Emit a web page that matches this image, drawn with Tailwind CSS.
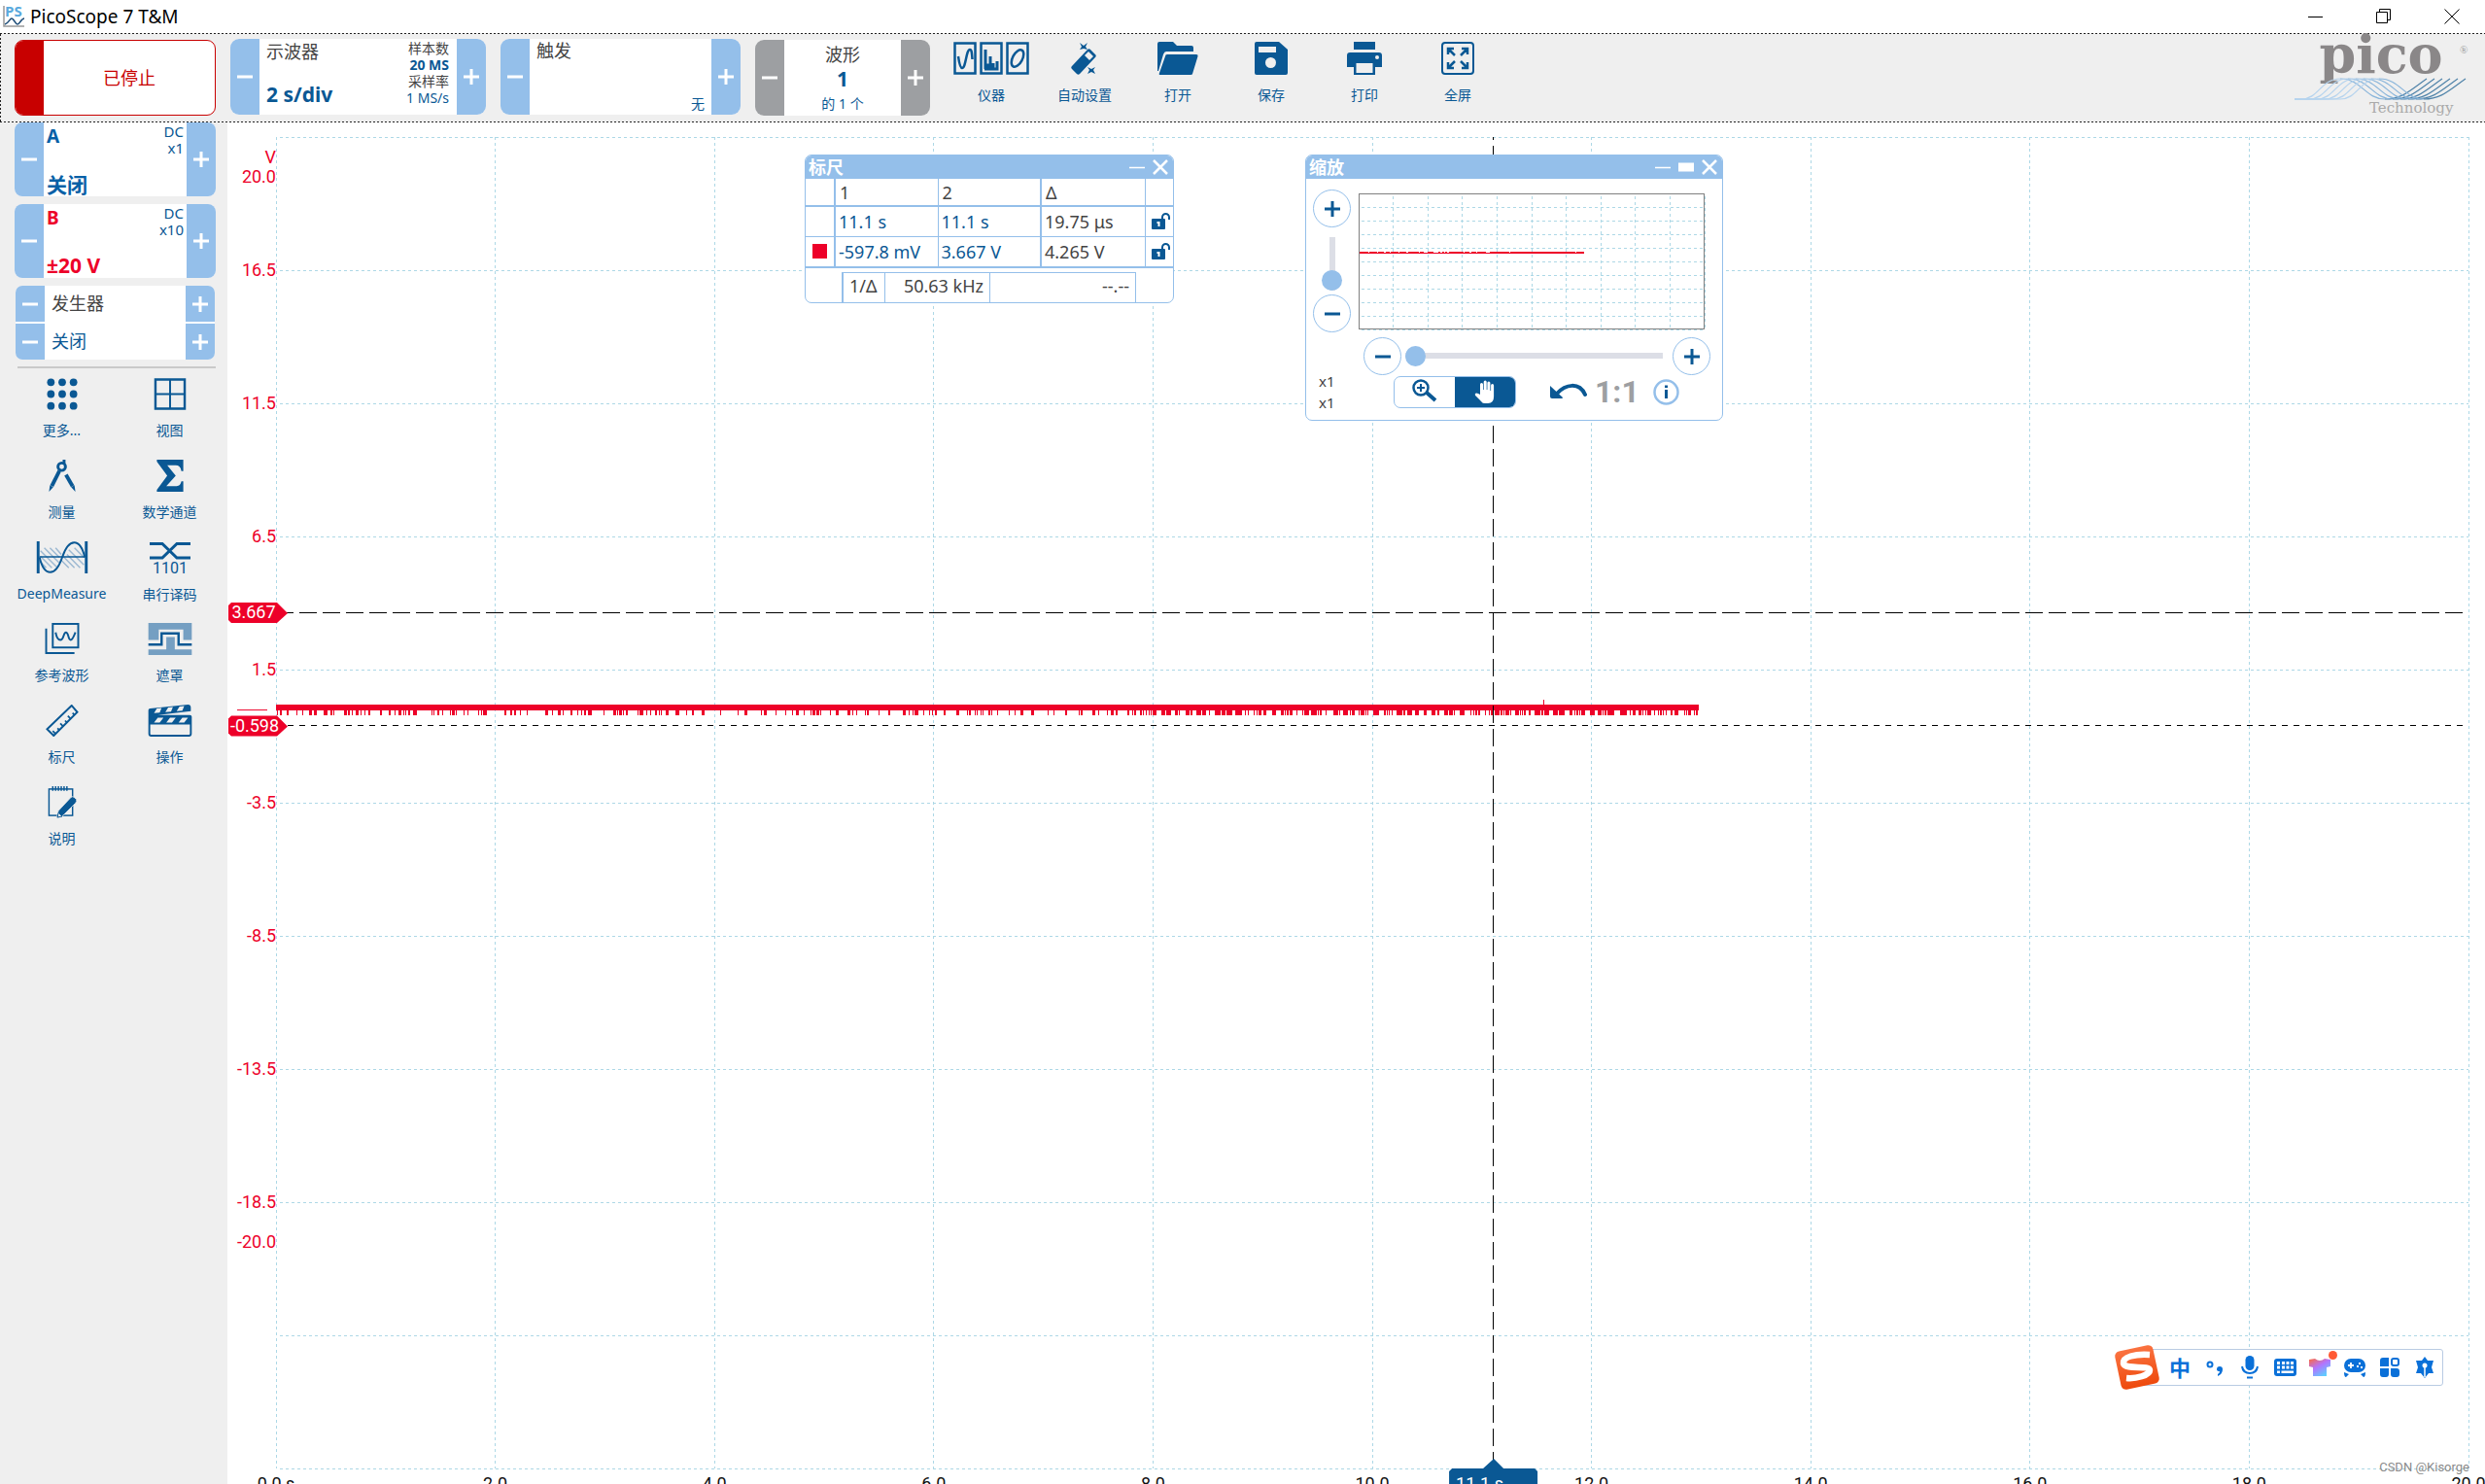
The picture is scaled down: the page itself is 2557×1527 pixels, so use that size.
<!DOCTYPE html>
<html lang="zh-CN">
<head>
<meta charset="utf-8">
<title>PicoScope 7 T&amp;M</title>
<script src="https://cdn.jsdelivr.net/npm/@tailwindcss/browser@4"></script>
</head>
<body class="flex h-screen flex-col overflow-hidden bg-white font-['Noto_Sans','Noto_Sans_CJK_SC',sans-serif] text-[#444]">

<!-- shared symbols -->
<svg class="hidden">
  <symbol id="minus" viewBox="0 0 16 16"><path d="M0 8h16" stroke="currentColor" stroke-width="3"/></symbol>
  <symbol id="plus" viewBox="0 0 16 16"><path d="M0 8h16M8 0v16" stroke="currentColor" stroke-width="3"/></symbol>
  <symbol id="lock" viewBox="0 0 20 18"><rect x="0" y="6" width="14" height="11" rx="1" fill="#0a5894"/><path d="M11 7V4.500a3.500 3.500 0 0 1 7 0V7" fill="none" stroke="#0a5894" stroke-width="2"/><path d="M5.500 9h3v5h-2v-3h-1z" fill="#fff"/></symbol>
</svg>

<header class="flex h-[34px] shrink-0 items-center justify-between pr-[26px] pl-[3px]">
  <div class="flex items-center gap-[6px]">
    <svg class="h-6 w-[22px] overflow-visible" viewBox="0 0 22 24"><path d="M1 1v21h21" fill="none" stroke="#999" stroke-width="1.500"/><path d="M2 20c4-1 5-6 7-6s4 6 6 6 4-6 7-6" fill="none" stroke="#1f4e79" stroke-width="1.500"/><text x="2" y="12" font-family="Open Sans" font-weight="700" font-size="15" fill="#5aa9dd">PS</text></svg>
    <h1 class="text-[19px] leading-6 text-black">PicoScope 7 T&amp;M</h1>
  </div>
  <div class="flex items-center gap-[54px] text-black">
    <button aria-label="最小化"><svg class="size-4" viewBox="0 0 16 16"><path d="M0 8.500h15" stroke="currentColor"/></svg></button>
    <button aria-label="还原"><svg class="size-4" viewBox="0 0 16 16"><path d="M.5 3.500h11v11H.5zM3.500 3.500v-3h11v11h-3" fill="none" stroke="currentColor"/></svg></button>
    <button aria-label="关闭"><svg class="size-4" viewBox="0 0 16 16"><path d="M.5.5l15 15M15.500.5l-15 15" stroke="currentColor"/></svg></button>
  </div>
</header>

<!-- toolbar -->
<div class="h-px shrink-0 bg-[repeating-linear-gradient(90deg,#222_0_2px,#efefef_2px_4px)]"></div>
<div class="flex h-[90px] shrink-0 items-start bg-[#efefef] pr-[17px]">
  <div class="h-full w-px bg-[repeating-linear-gradient(180deg,#222_0_2px,#efefef_2px_4px)]"></div>
  <button class="mt-[6px] ml-[14px] flex h-[78px] w-[207px] overflow-hidden rounded-[9px] border border-[#c80000] bg-white text-lg text-[#c80000]">
    <span class="h-full w-[29px] bg-[#c80000]"></span><span class="flex flex-1 items-center justify-center self-center">已停止</span>
  </button>

  <section class="mt-[5px] ml-[15px] flex h-[78px] w-[263px] overflow-hidden rounded-[9px] bg-white">
    <button aria-label="减小时基" class="flex w-[30px] items-center justify-center bg-[#94bfea] text-white"><svg class="size-4"><use href="#minus"/></svg></button>
    <div class="flex flex-1 justify-between pr-2 pl-[7px]">
      <div class="flex flex-col justify-between pb-[7px]"><span class="text-lg leading-[27px]">示波器</span><span class="text-[21px] leading-7 font-bold text-[#0a5894]">2 s/div</span></div>
      <div class="flex flex-col pt-px text-right text-[14px] leading-[17px]"><span>样本数</span><b class="text-[#0a5894]">20 MS</b><span>采样率</span><span class="text-[#0a5894]">1 MS/s</span></div>
    </div>
    <button aria-label="增大时基" class="flex w-[30px] items-center justify-center bg-[#94bfea] text-white"><svg class="size-4"><use href="#plus"/></svg></button>
  </section>

  <section class="mt-[5px] ml-[15px] flex h-[78px] w-[247px] overflow-hidden rounded-[9px] bg-white">
    <button aria-label="上一触发" class="flex w-[30px] items-center justify-center bg-[#94bfea] text-white"><svg class="size-4"><use href="#minus"/></svg></button>
    <div class="flex flex-1 flex-col justify-between px-[7px]"><span class="text-lg leading-6">触发</span><span class="self-end text-[14px] leading-[22px] text-[#0a5894]">无</span></div>
    <button aria-label="下一触发" class="flex w-[30px] items-center justify-center bg-[#94bfea] text-white"><svg class="size-4"><use href="#plus"/></svg></button>
  </section>

  <section class="mt-[6px] ml-[15px] flex h-[78px] w-[180px] overflow-hidden rounded-[9px] bg-white">
    <button aria-label="上一波形" class="flex w-[30px] items-center justify-center bg-[#9d9fa2] text-white"><svg class="size-4"><use href="#minus"/></svg></button>
    <div class="flex flex-1 flex-col items-center pt-[3px]"><span class="text-lg leading-6">波形</span><b class="text-[21px] leading-[26px] text-[#0a5894]">1</b><span class="text-[14px] leading-[25px] text-[#0a5894]">的 1 个</span></div>
    <button aria-label="下一波形" class="flex w-[30px] items-center justify-center bg-[#9d9fa2] text-white"><svg class="size-4"><use href="#plus"/></svg></button>
  </section>

  <nav class="ml-[15px] flex pt-2 text-[14px] leading-5 text-[#0a5894]">
    <button class="flex w-24 flex-col items-center gap-[11px]">
      <svg class="h-[34px] w-[78px]" viewBox="0 0 78 34" fill="none" stroke="currentColor" stroke-width="2.500"><path d="M1.500 1.500h21v31h-21zM28.500 1.500h21v31h-21zM55.500 1.500h21v31h-21z"/><path d="M5 15c1 7 2 12 4 12 4 0 4-19 8-19 2 0 2 4 2.500 10"/><path d="M33 28V8v16h2v3h3V15v12h3v-5 6h4v-8 8H32" stroke-width="3"/><ellipse cx="66" cy="17" rx="5" ry="9.500" transform="rotate(28 66 17)"/></svg>仪器</button>
    <button class="flex w-24 flex-col items-center gap-[11px]">
      <svg class="size-[34px]" viewBox="0 0 34 34"><path d="M20 8c1-1 2-1 3 0l5 5c1 1 1 2 0 3L12 33c-1 1-2 1-3 0l-5-5c-1-1-1-2 0-3z" fill="currentColor"/><path d="M21 10l5 5-4 4-5-5z" fill="#efefef"/><path d="M12 1l4 3 4-3-2 4 2 3-4-1-4 1 2-3zM20 26l4 2 4-2-2 3 2 4-4-2-4 2 2-4z" fill="currentColor"/></svg>自动设置</button>
    <button class="flex w-24 flex-col items-center gap-[11px]">
      <svg class="h-[34px] w-[42px]" viewBox="0 0 42 34" fill="currentColor"><path d="M0 2q0-2 2-2h14l4 4h15q2 0 2 2v4H9q-2 0-3 3L1 30H0zM10 13h30q2 0 1.500 2L36 33q0 1-2 1H3q-2 0-1-2L8 15q0-2 2-2z"/></svg>打开</button>
    <button class="flex w-24 flex-col items-center gap-[11px]">
      <svg class="size-[34px]" viewBox="0 0 34 34"><path d="M2 0h23l9 8v24q0 2-2 2H2q-2 0-2-2V2q0-2 2-2z" fill="currentColor"/><path d="M4 5h18v6H4z" fill="#efefef"/><circle cx="16.500" cy="21.500" r="5.500" fill="#efefef"/></svg>保存</button>
    <button class="flex w-24 flex-col items-center gap-[11px]">
      <svg class="h-[34px] w-9" viewBox="0 0 36 34"><path d="M7 0h22v8H7zM3 11h30q3 0 3 3v12h-7v8H7v-8H0V14q0-3 3-3z" fill="currentColor"/><path d="M9.500 22h17v10h-17z" fill="#efefef"/><circle cx="31" cy="16" r="2" fill="#efefef"/></svg>打印</button>
    <button class="flex w-24 flex-col items-center gap-[11px]">
      <svg class="size-[34px]" viewBox="0 0 34 34" fill="none" stroke="currentColor" stroke-width="2"><rect x="1" y="1" width="32" height="32" rx="3"/><path stroke-width="2.500" d="M14 14L8 8M7 13V7h6M20 14l6-6M27 13V7h-6M14 20l-6 6M7 21v6h6M20 20l6 6M27 21v6h-6"/></svg>全屏</button>
  </nav>

  <svg class="ml-auto h-[86px] w-[182px] overflow-visible" viewBox="0 0 182 86" role="img" aria-label="pico Technology">
    <text x="92" y="40" text-anchor="middle" font-family="DejaVu Serif" font-weight="700" font-size="54" fill="#8a8788">pico</text>
    <text x="173" y="20" font-family="Liberation Serif" font-size="11" fill="#999">®</text>
    <g fill="none" stroke-width="1.200" id="waves"></g>
    <text x="80" y="81" font-family="DejaVu Serif" font-size="15" fill="#aaa">Technology</text>
  </svg>
</div>
<div class="h-px shrink-0 bg-[repeating-linear-gradient(90deg,#222_0_2px,#efefef_2px_4px)]"></div>

<div class="flex min-h-0 flex-1">
  <aside class="flex w-[234px] shrink-0 flex-col bg-[#efefef]">
    <div class="flex flex-col gap-2 pr-3 pl-[15px]">
      <section class="flex h-[76px] overflow-hidden rounded-[8px] bg-white">
        <button aria-label="A 减小量程" class="flex w-[30px] items-center justify-center bg-[#94bfea] text-white"><svg class="size-4"><use href="#minus"/></svg></button>
        <div class="flex flex-1 justify-between px-[3px] text-[#0560a6]">
          <div class="flex flex-col justify-between font-bold"><span class="text-[19px] leading-7">A</span><span class="text-[21px] leading-6">关闭</span></div>
          <div class="flex flex-col pt-px text-right text-[15px] leading-[17px] text-[#0a5894]"><span>DC</span><span>x1</span></div>
        </div>
        <button aria-label="A 增大量程" class="flex w-[30px] items-center justify-center bg-[#94bfea] text-white"><svg class="size-4"><use href="#plus"/></svg></button>
      </section>
      <section class="flex h-[76px] overflow-hidden rounded-[8px] bg-white">
        <button aria-label="B 减小量程" class="flex w-[30px] items-center justify-center bg-[#94bfea] text-white"><svg class="size-4"><use href="#minus"/></svg></button>
        <div class="flex flex-1 justify-between px-[3px] text-[#ed0029]">
          <div class="flex flex-col justify-between pb-px font-bold"><span class="text-[19px] leading-7">B</span><span class="text-[21px] leading-6">±20 V</span></div>
          <div class="flex flex-col pt-px text-right text-[15px] leading-[17px] text-[#0a5894]"><span>DC</span><span>x10</span></div>
        </div>
        <button aria-label="B 增大量程" class="flex w-[30px] items-center justify-center bg-[#94bfea] text-white"><svg class="size-4"><use href="#plus"/></svg></button>
      </section>
      <section class="mx-px grid h-[76px] grid-cols-[30px_1fr_30px] grid-rows-2 gap-y-[2px] overflow-hidden rounded-[7px] bg-white text-lg leading-9">
        <button aria-label="上一发生器" class="flex items-center justify-center bg-[#94bfea] text-white"><svg class="size-4"><use href="#minus"/></svg></button><span class="pl-[7px]">发生器</span><button aria-label="下一发生器" class="flex items-center justify-center bg-[#94bfea] text-white"><svg class="size-4"><use href="#plus"/></svg></button>
        <button aria-label="上一状态" class="flex items-center justify-center bg-[#94bfea] text-white"><svg class="size-4"><use href="#minus"/></svg></button><span class="pl-[7px] text-[#0a5894]">关闭</span><button aria-label="下一状态" class="flex items-center justify-center bg-[#94bfea] text-white"><svg class="size-4"><use href="#plus"/></svg></button>
      </section>
    </div>
    <hr class="mt-[7px] mr-3 ml-[18px] border-t-2 border-[#c9c9c9]">
    <nav class="grid grid-cols-2 gap-y-5 pt-[10px] pr-1 pl-2 text-[14px] leading-5 text-[#0a5894]">
      <button class="flex h-16 flex-col items-center gap-[11px]"><svg class="size-[34px]" viewBox="0 0 34 34" fill="currentColor"><g id="dots"><circle cx="5" cy="4.500" r="4"/><circle cx="17" cy="4.500" r="4"/><circle cx="29" cy="4.500" r="4"/></g><use href="#dots" y="12.500"/><use href="#dots" y="25"/></svg>更多...</button>
      <button class="flex h-16 flex-col items-center gap-[11px]"><svg class="size-[34px]" viewBox="0 0 34 34" fill="none" stroke="currentColor"><path stroke-width="2.500" d="M1.500 1.500h31v31h-31z"/><path stroke-width="2" d="M17 1v32M1 17h32"/></svg>视图</button>
      <button class="flex h-16 flex-col items-center gap-[11px]"><svg class="size-[34px]" viewBox="0 0 34 34" fill="none" stroke="currentColor"><circle cx="16.500" cy="7.500" r="4" stroke-width="3"/><path d="M19 0v4" stroke-width="3"/><path d="M14 12L6 28" stroke-width="4"/><path d="M21 16l7 12" stroke-width="4"/><path d="M4 27l3.500 2L3 34zM26.500 29l3.500-2 1 7z" fill="currentColor" stroke="none"/></svg>测量</button>
      <button class="flex h-16 flex-col items-center gap-[11px]"><svg class="size-[34px]" viewBox="0 0 34 34" fill="currentColor"><path d="M3 0h28v12h-2q-1-6-6-6H14l9 11-10 11h11q4 0 5-5h2v11H3v-2l11-15L3 2z"/></svg>数学通道</button>
      <button class="flex h-16 flex-col items-center gap-[11px]"><svg class="h-[34px] w-[54px]" viewBox="0 0 54 34" fill="none" stroke="currentColor"><path stroke="#9db9d2" stroke-width="1.500" d="M4 10l18 18M4 16l12 12M8 7l16 16M14 7l10 10M20 7l6 7M4 22l6 6M28 16l12 12M32 14l14 14M34 9l16 16M40 7l10 10M26 20l8 8"/><path stroke-width="3" d="M1.500 0v34M52.500 0v34"/><path stroke-width="1.500" d="M3 16.500h48"/><path stroke-width="2" d="M3 17c5 21 17 21 24 0s19-21 24 0"/></svg>DeepMeasure</button>
      <button class="flex h-16 flex-col items-center gap-[11px]"><svg class="h-[34px] w-[42px] overflow-visible" viewBox="0 0 42 34"><path fill="none" stroke="currentColor" stroke-width="3" d="M0 2.500h13l15 14.500h14M0 17h13L28 2.500h14"/><text x="21" y="33" text-anchor="middle" font-family="Roboto" font-size="16" fill="currentColor">1101</text></svg>串行译码</button>
      <button class="flex h-16 flex-col items-center gap-[11px]"><svg class="h-[34px] w-9" viewBox="0 0 36 34" fill="none" stroke="currentColor"><rect x="8" y="1" width="27" height="25" stroke-width="2"/><path stroke-width="2" d="M1 6v26h30M11 10c1 5 3 8 5 8 4 0 3-8 6-8s2 8 5 8c2 0 3-3 5-8"/></svg>参考波形</button>
      <button class="flex h-16 flex-col items-center gap-[11px]"><svg class="h-[34px] w-[46px]" viewBox="0 0 46 34"><path fill="#759fc2" d="M0 0h46v18h-9V7H11v11H0zM19 15h9v13h18v6H0v-6h19z"/><path fill="none" stroke="currentColor" stroke-width="2.500" d="M0 23h14V11h18v12h14"/></svg>遮罩</button>
      <button class="flex h-16 flex-col items-center gap-[11px]"><svg class="size-[34px]" viewBox="0 0 34 34" fill="none" stroke="currentColor" stroke-width="2"><path d="M1 26L27 1l6 7L8 33z"/><path stroke-width="1.800" d="M10 31l-3-3M14 27l-2-2M18 23l-3-3M22 19l-2-2M26 15l-3-3M30 11l-2-2"/></svg>标尺</button>
      <button class="flex h-16 flex-col items-center gap-[11px]"><svg class="h-[34px] w-[46px]" viewBox="0 0 46 34"><path fill="currentColor" d="M0 6q0-2 2-2L42 0q3 0 3 3v4L10 11h34q2 0 2 2v18q0 3-3 3H3q-3 0-3-3z"/><path fill="#efefef" d="M2 21h42v10q0 1-1 1H3q-1 0-1-1zM9 4l5-.5-2 5-6 .5zM21 3l5-.5-2 5-6 .5zM33 2l5-.5-2 5-6 .5zM10 14h6l-4 5H6zM23 14h6l-4 5h-6zM36 14h6l-4 5h-6z"/></svg>操作</button>
      <button class="flex h-16 flex-col items-center gap-[11px]"><svg class="size-[34px]" viewBox="0 0 34 34" fill="none" stroke="currentColor"><rect x="3" y="3" width="25" height="28" stroke-width="1.500"/><path stroke-width="1.500" d="M7 0v5M10 0v5M13 0v5M16 0v5M19 0v5M22 0v5"/><path fill="currentColor" stroke="#efefef" stroke-width=".8" d="M26 12q2-2 4 0l2 2q1 2-1 4L18 31l-7 3 2-8z"/><path d="M12 33l1-5 4 4z" fill="#efefef" stroke-width="1"/></svg>说明</button>
    </nav>
  </aside>

  <main class="relative min-w-0 flex-1 overflow-hidden bg-white pt-[15px] pr-[17px] pb-4 pl-[50px]">
    <!-- scope view: 0..20 s across, 21.5 V at the top, 5 V per division -->
    <svg id="scope" class="block h-full w-full overflow-visible font-[Roboto,sans-serif] text-lg" role="img" aria-label="示波器视图">
      <g id="grid" stroke="#add8e6" stroke-dasharray="3 3" shape-rendering="crispEdges"></g>
      <g id="volts" fill="#ed0029" text-anchor="end"></g>
      <g id="times" fill="#111" text-anchor="middle"></g>
      <svg y="43%" width="1" height="1" overflow="visible"><path d="M-40 .5h31" stroke="#ed0029"/></svg>
      <svg y="43%" width="64.9%" height="12" viewBox="0 -6 1464 12" preserveAspectRatio="none" overflow="visible" shape-rendering="crispEdges"><g transform="translate(0 -6)"><path d="M0-5h1464v6H0zM1304-10h1v6h-1z" fill="#ed0029"/><path id="noise" fill="#ed0029"/></g></svg>
      <g stroke="#000" shape-rendering="crispEdges">
        <line x1="0" x2="100%" y1="35.7%" y2="35.7%" stroke-dasharray="18 6"/>
        <line x1="0" x2="100%" y1="44.2%" y2="44.2%" stroke-dasharray="6 6"/>
        <line x1="55.5%" x2="55.5%" y1="0" y2="100%" stroke-dasharray="18 6" stroke-dashoffset="15"/>
      </g>
      <svg x="-49" y="35.7%" width="62" height="22" overflow="visible"><path d="M3-10h47l11 11-11 10H3l-3-3V-7z" fill="#ed0029"/><text x="26" y="6" text-anchor="middle" fill="#fff">3.667</text></svg>
      <svg x="-49" y="44.2%" width="62" height="22" overflow="visible"><path d="M3-10h47l11 11-11 10H3l-3-3V-7z" fill="#ed0029"/><text x="27" y="6" text-anchor="middle" fill="#fff">-0.598</text></svg>
      <svg x="55.5%" y="100%" width="91" height="30" overflow="visible"><path d="M-45 3l3-3h32L1-10 11 0h32l3 3v27h-91z" fill="#0a5894"/><text x="-38" y="22" fill="#fff">11.1 s</text></svg>
    </svg>

    <!-- rulers window -->
    <section class="absolute top-[33px] left-[594px] w-[380px] overflow-hidden rounded-[7px] border border-[#94bfea] bg-white text-lg leading-6">
      <header class="flex h-6 items-center bg-[#94bfea] px-[3px] pr-[5px] text-white">
        <h2 class="mr-auto text-lg leading-6 font-bold">标尺</h2>
        <button aria-label="最小化" class="mr-2"><svg class="size-4" viewBox="0 0 16 16"><path d="M0 8.500h16" stroke="currentColor" stroke-width="1.500"/></svg></button>
        <button aria-label="关闭"><svg class="size-4" viewBox="0 0 16 16"><path d="M1 1l14 14M15 1L1 15" stroke="currentColor" stroke-width="2.500"/></svg></button>
      </header>
      <table class="w-full table-fixed border-collapse text-left">
        <colgroup><col class="w-[30px]"><col class="w-[106px]"><col class="w-[106px]"><col class="w-[107px]"><col></colgroup>
        <tr class="h-7 border-b-2 border-[#94bfea]"><td></td><th class="border-l-2 border-[#94bfea] pl-1 font-normal">1</th><th class="border-l border-[#94bfea] pl-1 font-normal">2</th><th class="border-l-2 border-[#94bfea] pl-1 font-normal">Δ</th><td class="border-l border-[#94bfea]"></td></tr>
        <tr class="h-[31px] border-b border-[#94bfea] text-[#0a5894]"><td></td><td class="border-l-2 border-[#94bfea] pl-[3px]">11.1 s</td><td class="border-l border-[#94bfea] pl-[3px]">11.1 s</td><td class="border-l-2 border-[#94bfea] pl-[3px] text-[#444]">19.75 μs</td><td class="border-l border-[#94bfea] pl-[6px]"><button aria-label="锁定时间标尺" class="block"><svg class="h-[18px] w-5"><use href="#lock"/></svg></button></td></tr>
        <tr class="h-8 border-b-2 border-[#94bfea] text-[#0a5894]"><td class="pl-[7px]"><span class="block size-[15px] bg-[#ed0029]"></span></td><td class="border-l-2 border-[#94bfea] pl-[3px]">-597.8 mV</td><td class="border-l border-[#94bfea] pl-[3px]">3.667 V</td><td class="border-l-2 border-[#94bfea] pl-[3px] text-[#444]">4.265 V</td><td class="border-l border-[#94bfea] pl-[6px]"><button aria-label="锁定电压标尺" class="block"><svg class="h-[18px] w-5"><use href="#lock"/></svg></button></td></tr>
      </table>
      <dl class="mt-1 mr-[38px] ml-[37px] flex h-[31px] items-stretch border-t border-r border-l-2 border-[#94bfea] leading-[27px]"><dt class="w-[43px] border-r border-[#94bfea] pl-[6px]">1/Δ</dt><dd class="w-[108px] border-r border-[#94bfea] pr-[6px] text-right">50.63 kHz</dd><dd class="flex-1 pr-[6px] text-right">--.--</dd></dl>
    </section>

    <!-- zoom window -->
    <section class="absolute top-[33px] left-[1109px] h-[274px] w-[430px] overflow-hidden rounded-[7px] border border-[#94bfea] bg-white">
      <header class="flex h-6 items-center gap-2 bg-[#94bfea] pr-[5px] pl-[3px] text-white">
        <h2 class="mr-auto text-lg leading-6 font-bold">缩放</h2>
        <button aria-label="最小化"><svg class="size-4" viewBox="0 0 16 16"><path d="M0 8.500h16" stroke="currentColor" stroke-width="1.500"/></svg></button>
        <button aria-label="最大化"><svg class="size-4" viewBox="0 0 16 16"><path d="M0 3.500h16v9H0z" fill="currentColor"/></svg></button>
        <button aria-label="关闭"><svg class="size-4" viewBox="0 0 16 16"><path d="M1 1l14 14M15 1L1 15" stroke="currentColor" stroke-width="2.500"/></svg></button>
      </header>
      <div class="flex items-start pt-[11px] pl-[7px]">
        <div class="flex w-[39px] flex-col items-center">
          <button aria-label="垂直放大" class="flex size-[39px] items-center justify-center rounded-full border border-[#94bfea] text-[#0a5894]"><svg class="size-4"><use href="#plus"/></svg></button>
          <input type="range" aria-label="垂直缩放" min="0" max="100" value="0" class="mt-[10px] mb-1 h-[55px] w-[21px] appearance-none bg-[linear-gradient(90deg,transparent_8px,#dcdee6_8px_14px,transparent_14px)] [direction:rtl] [writing-mode:vertical-lr] [&::-webkit-slider-thumb]:size-[21px] [&::-webkit-slider-thumb]:appearance-none [&::-webkit-slider-thumb]:rounded-full [&::-webkit-slider-thumb]:bg-[#94bfea]">
          <button aria-label="垂直缩小" class="flex size-[39px] items-center justify-center rounded-full border border-[#94bfea] text-[#0a5894]"><svg class="size-4"><use href="#minus"/></svg></button>
        </div>
        <svg class="mt-1 ml-2 h-[140px] w-[356px] overflow-visible" shape-rendering="crispEdges"><g id="mini" stroke="#add8e6" stroke-dasharray="3 3"></g><rect x=".5" y=".5" width="355" height="139" fill="none" stroke="#808080"/><path d="M1 61h231" stroke="#ed0029" stroke-width="2"/><path d="M10 60.500h1M19 60.500h1M26 60.500h2M32 60.500h1M41 60.500h1M49 60.500h2M62 60.500h1M67 60.500h4M77 60.500h5M84 60.500h2M88 60.500h1M91 60.500h2M108 60.500h1M114 60.500h2M121 60.500h1M131 60.500h4M155 60.500h1M223 60.500h1" stroke="#fff"/></svg>
      </div>
      <div class="mt-[5px] flex items-center pr-3 pl-[59px]">
        <button aria-label="水平缩小" class="flex size-[39px] items-center justify-center rounded-full border border-[#94bfea] text-[#0a5894]"><svg class="size-4"><use href="#minus"/></svg></button>
        <input type="range" aria-label="水平缩放" min="0" max="100" value="0" class="mr-[10px] ml-1 h-[21px] min-w-0 flex-1 appearance-none bg-[linear-gradient(180deg,transparent_7px,#dcdee6_7px_13px,transparent_13px)] [&::-webkit-slider-thumb]:size-[21px] [&::-webkit-slider-thumb]:appearance-none [&::-webkit-slider-thumb]:rounded-full [&::-webkit-slider-thumb]:bg-[#94bfea]">
        <button aria-label="水平放大" class="flex size-[39px] items-center justify-center rounded-full border border-[#94bfea] text-[#0a5894]"><svg class="size-4"><use href="#plus"/></svg></button>
      </div>
      <div class="-mt-[5px] flex items-center pl-[13px]">
        <div class="w-[77px] text-[15px] leading-[22px]"><p>x1</p><p>x1</p></div>
        <div class="flex h-[33px] w-[126px] overflow-hidden rounded-[7px] border border-[#94bfea]">
          <button aria-label="缩放工具" class="flex flex-1 items-center justify-center"><svg class="size-[26px]" viewBox="0 0 26 26" fill="none" stroke="#0a5894"><circle cx="9" cy="9" r="7.500" stroke-width="2.500"/><path stroke-width="2" d="M5 9h8M9 5v8"/><path stroke-width="4" d="M15 14l9 8"/></svg></button>
          <button aria-label="平移工具" class="flex flex-1 items-center justify-center bg-[#0a5894]"><svg class="size-6" viewBox="0 0 24 24" fill="#fff"><path d="M7 14V4.500a1.500 1.500 0 0 1 3 0V10h.7V2a1.500 1.500 0 0 1 3 0v8h.7V3a1.500 1.500 0 0 1 3 0v8h.7V5.500a1.500 1.500 0 0 1 3 0V17q0 7-6 7h-3q-3 0-5-3l-5-5q-1-2 1-2.500 2 0 3.900 1.500z"/></svg></button>
        </div>
        <button aria-label="撤销" class="ml-[35px]"><svg class="block h-[18px] w-[38px]" viewBox="0 0 38 18"><path d="M0 3l13 12q0 1-1 1H2q-2 0-2-2z" fill="#0a5894"/><path d="M7 11C16 1 30-1 36 12" fill="none" stroke="#0a5894" stroke-width="4" stroke-linecap="round"/></svg></button>
        <button class="ml-2 font-[Roboto,sans-serif] text-[32px] leading-9 font-bold text-[#9d9fa2]">1:1</button>
        <button aria-label="信息" class="mr-11 ml-auto"><svg class="block size-[27px]" viewBox="0 0 27 27"><circle cx="13.500" cy="13.500" r="12" fill="none" stroke="#94bfea" stroke-width="2.500"/><path d="M12 11h3v9h-3zM12 6.500h3v2.500h-3z" fill="#0a5894"/></svg></button>
      </div>
    </section>

    <!-- input method bar -->
    <div class="absolute right-[43px] bottom-[101px] flex h-[38px] items-center rounded-[3px] border border-[#b9cbe3] bg-white pl-[22px] text-[#0a70d8]">
      <svg class="absolute -left-[28px] size-12" viewBox="0 0 48 48"><defs><linearGradient id="so" x1="0" y1="0" x2="0" y2="1"><stop offset="0" stop-color="#fa7240"/><stop offset="1" stop-color="#ee4a0d"/></linearGradient></defs><rect x="4" y="4" width="40" height="40" rx="5" fill="url(#so)" transform="rotate(-12 24 24)"/><path d="M37 11C22 10 9 13 10 20c2 7 27 1 27 7 0 5-14 9-24 8" fill="none" stroke="#fff" stroke-width="6.500"/></svg>
      <button class="w-9 text-[22px] leading-9 font-bold">中</button>
      <button aria-label="标点" class="w-9"><svg class="mx-auto h-6 w-5" viewBox="0 0 20 24"><circle cx="5" cy="9" r="2.500" fill="none" stroke="currentColor" stroke-width="2"/><path d="M12 14a3 3 0 0 1 6 0q0 5-5 7v-2q2-1 2-3-3 0-3-2z" fill="currentColor"/></svg></button>
      <button aria-label="语音" class="w-9"><svg class="mx-auto h-6 w-[18px]" viewBox="0 0 18 24"><rect x="4.500" y="0" width="9" height="15" rx="4.500" fill="currentColor"/><path d="M1 11q1 7 8 7t8-7M6 22.500h6" fill="none" stroke="currentColor" stroke-width="2"/></svg></button>
      <button aria-label="软键盘" class="w-9"><svg class="mx-auto h-[18px] w-[23px]" viewBox="0 0 23 18"><rect width="23" height="18" rx="3" fill="currentColor"/><path fill="#fff" d="M3 3h3v3H3zM8 3h3v3H8zM12.500 3h3v3h-3zM17 3h3v3h-3zM3 7.500h3v3H3zM8 7.500h3v3H8zM12.500 7.500h3v3h-3zM17 7.500h3v3h-3zM3 12.500h3v2.500H3zM7.500 12.500h12.500v2.500H7.500z"/></svg></button>
      <button aria-label="皮肤" class="relative w-9"><svg class="mx-auto h-[18px] w-[22px]" viewBox="0 0 22 18"><defs><linearGradient id="sk" x1="0" y1="0" x2=".7" y2="1"><stop offset="0" stop-color="#ff6a3a"/><stop offset=".5" stop-color="#b274ff"/><stop offset="1" stop-color="#5bd0ff"/></linearGradient></defs><path d="M0 1l6-1q5 4 10 0l6 1v7l-4 1v9H4V9L0 8z" fill="url(#sk)"/></svg><span class="absolute -top-2 right-0 size-[9px] rounded-full bg-[#ff5a34]"></span></button>
      <button aria-label="游戏" class="w-9"><svg class="mx-auto h-[19px] w-6" viewBox="0 0 24 19"><rect x="1" y="0" width="22" height="14" rx="7" fill="currentColor"/><path d="M1 14l5 2-3 3q-2 0-2-5zM23 14l-5 2 3 3q2 0 2-5z" fill="currentColor"/><path d="M5 7h6M8 4v6M16 5h2M14 8h2M18 9h2" stroke="#fff" stroke-width="1.800"/></svg></button>
      <button aria-label="工具箱" class="w-9"><svg class="mx-auto size-5" viewBox="0 0 20 20" fill="currentColor"><path d="M3 0h6v9H0V3q0-3 3-3zM0 11h9v6q0 3-3 3H3q-3 0-3-3zM11 11h6q3 0 3 3v3q0 3-3 3h-3q-3 0-3-3z"/><rect x="12" y="1" width="7" height="7" rx="2" fill="none" stroke="currentColor" stroke-width="2"/></svg></button>
      <button aria-label="设置" class="w-9"><svg class="mx-auto h-[22px] w-5" viewBox="0 0 20 22" fill="currentColor"><path d="M10 0l3 4h6l-2 7 2 6h-5l-4 5-4-5H1l2-6-2-7h6z"/><path d="M10 9v12" stroke="#fff" stroke-width="1.500"/><circle cx="10" cy="9" r="2.500" fill="#fff"/></svg></button>
    </div>
    <p class="absolute right-4 bottom-[7px] font-[Roboto,sans-serif] text-[13px] leading-5 text-[#8a8a8a]">CSDN @Kisorge</p>
  </main>
</div>

<script>
  const el = id => document.getElementById(id);
  let grid = '', volts = '<text x="0" y="27">V</text>', times = '', mini = '', waves = '';
  for (let i = 0; i <= 10; i++) {
    const p = i * 10 + '%';
    grid += `<line x1="${p}" x2="${p}" y1="0" y2="100%"/><line x1="4" x2="100%" y1="${p}" y2="${p}"/>`;
    times += `<text x="${p}" y="100%" dy="22">${(i * 2).toFixed(1)}${i ? '' : ' s'}</text>`;
    if (i) mini += `<line x1="${i * 10}%" x2="${i * 10}%" y1="3" y2="100%"/><line x1="3" x2="100%" y1="${i * 10}%" y2="${i * 10}%"/>`;
  }
  for (const v of [20, 16.5, 11.5, 6.5, 1.5, -3.5, -8.5, -13.5, -18.5, -20])
    volts += `<text x="0" y="${(21.5 - v) * 2}%" dy="6">${v.toFixed(1)}</text>`;
  // sampled noise below the trace, denser in its later part
  let seed = 7, d = '';
  const rnd = () => (seed = (seed * 16807) % 2147483647) / 2147483647;
  for (let x = 1; x < 1462;) {
    const dense = x > 870;
    const w = Math.min(1 + Math.floor(rnd() * rnd() * (dense ? 9 : 4)), 1463 - x);
    d += `M${x} 1h${w}v5h-${w}z`;
    x += w + 1 + Math.floor(rnd() * rnd() * (dense ? 7 : 18));
  }
  // colours run from pale to dark along each strand of the logo
  for (let i = 0; i < 6; i++) {
    const x = i * 8;
    waves += `<path stroke="#b5d3ee" d="M3 67H${10 + x}C${28 + x} 67 ${30 + x} 46 ${50 + x} 46"/><path stroke="#88b4da" d="M${50 + x} 46C${72 + x} 46 ${76 + x} 67 ${96 + x} 67"/><path stroke="#4f83a9" d="M${96 + x} 67C${114 + x} 67 ${122 + x} 58 ${139 + x} 46"/>`;
  }
  el('grid').innerHTML = grid; el('volts').innerHTML = volts; el('times').innerHTML = times;
  el('mini').innerHTML = mini; el('waves').innerHTML = waves; el('noise').setAttribute('d', d);
</script>
</body>
</html>
